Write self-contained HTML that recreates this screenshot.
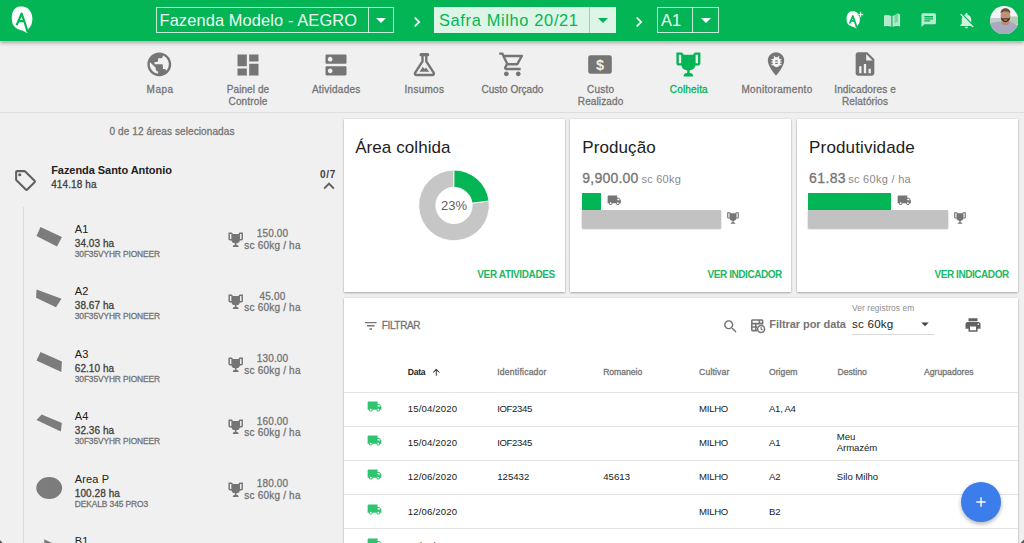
<!DOCTYPE html><html lang="pt-BR"><head><meta charset="utf-8"><title>Aegro - Colheita</title><style>
html,body{margin:0;padding:0}body{width:1024px;height:543px;overflow:hidden;background:#F0F0F0;font-family:"Liberation Sans",sans-serif;position:relative}
.t{position:absolute;white-space:nowrap;line-height:1;margin:0}
</style></head><body>
<div style="position:absolute;left:0;top:0;width:1024px;height:41px;background:#03B554;box-shadow:0 2px 4px rgba(0,0,0,.3)"></div>
<div style="position:absolute;left:0;top:112px;width:1024px;height:1px;background:#DEDEDE"></div>
<svg style="position:absolute;left:11px;top:6px" width="23" height="28" viewBox="0 0 23 28">
<path fill="#fff" d="M8.8 0.5C12 0.3 15 1 16.6 2.3C19.5 4.5 21.4 8.5 21.4 12.4C21.4 15 20.8 17.2 20.3 18.9C19.6 20.5 18.6 21.6 17.5 22.5L16.2 27L12 24.8C8 24 4.6 22.4 2.8 19.8C1.2 17.6 0.8 15 0.8 12.4C0.8 9 1.4 6.2 2.8 4.1C4.2 2 6.4 0.7 8.8 0.5Z"/>
<path fill="none" stroke="#03B554" stroke-width="2.2" stroke-linecap="round" stroke-linejoin="round" d="M6 18.4L10.6 7.6L14.2 18L16.4 25.2M7.8 15.1L13.4 15"/>
</svg>
<div style="position:absolute;left:156px;top:7px;width:238px;height:26px;box-sizing:border-box;border:1px solid rgba(255,255,255,.75)"></div>
<div style="position:absolute;left:368px;top:7px;width:1px;height:26px;background:rgba(255,255,255,.75)"></div>
<svg style="position:absolute;left:369.0px;top:8px" width="24" height="24" viewBox="0 0 24 24" ><path fill="#fff" d="M7 10l5 5 5-5z"/></svg>
<div style="position:absolute;left:434px;top:7px;width:182px;height:26px;background:#DDF5E6"></div>
<div style="position:absolute;left:589px;top:7px;width:1px;height:26px;background:#8FDCAE"></div>
<svg style="position:absolute;left:590.5px;top:8px" width="24" height="24" viewBox="0 0 24 24" ><path fill="#03B554" d="M7 10l5 5 5-5z"/></svg>
<div style="position:absolute;left:657px;top:7px;width:62px;height:26px;box-sizing:border-box;border:1px solid rgba(255,255,255,.75)"></div>
<div style="position:absolute;left:692px;top:7px;width:1px;height:26px;background:rgba(255,255,255,.75)"></div>
<svg style="position:absolute;left:693.5px;top:8px" width="24" height="24" viewBox="0 0 24 24" ><path fill="#fff" d="M7 10l5 5 5-5z"/></svg>
<svg style="position:absolute;left:406.5px;top:11.5px" width="20" height="20" viewBox="0 0 24 24" ><path fill="#fff" d="M10 6L8.59 7.41 13.17 12l-4.58 4.59L10 18l6-6z"/></svg>
<svg style="position:absolute;left:628.5px;top:11.5px" width="20" height="20" viewBox="0 0 24 24" ><path fill="#fff" d="M10 6L8.59 7.41 13.17 12l-4.58 4.59L10 18l6-6z"/></svg>
<svg style="position:absolute;left:846.2px;top:11px" width="20" height="18" viewBox="0 0 20 18">
<g transform="scale(0.65)"><path fill="#fff" d="M8.8 0.5C12 0.3 15 1 16.6 2.3C19.5 4.5 21.4 8.5 21.4 12.4C21.4 15 20.8 17.2 20.3 18.9C19.6 20.5 18.6 21.6 17.5 22.5L16.2 27L12 24.8C8 24 4.6 22.4 2.8 19.8C1.2 17.6 0.8 15 0.8 12.4C0.8 9 1.4 6.2 2.8 4.1C4.2 2 6.4 0.7 8.8 0.5Z"/>
<path fill="none" stroke="#03B554" stroke-width="2.6" stroke-linecap="round" stroke-linejoin="round" d="M6 18.4L10.6 7.6L14.2 18L16.2 24.6M7.8 15.1L13.4 15"/></g>
<path fill="#fff" stroke="#03B554" stroke-width="0.5" d="M13.9 0.8h1.5v2h2v1.5h-2v2h-1.5v-2h-2v-1.5h2z"/>
</svg>
<svg style="position:absolute;left:883px;top:12px" width="18" height="16" viewBox="0 0 18 16">
<g fill="rgba(255,255,255,.70)"><path d="M1 3.4C3.4 2.6 6 2.8 8.3 3.9V14.8C6 13.8 3.4 13.6 1 14.4Z"/>
<path d="M9.5 3.9C10.4 3.4 11 3.1 11.8 2.9V11.6L14.6 9.4V1.2L17.1 2.4V14.4C14.6 13.6 12 13.8 9.5 14.8Z"/></g>
<path fill="rgba(255,255,255,.45)" d="M11.8 2.9L14.6 1.2V9.4L11.8 11.6Z"/></svg>
<svg style="position:absolute;left:920.1px;top:11.7px" width="17.4" height="16.4" viewBox="0 0 24 24" preserveAspectRatio="none"><path fill="rgba(255,255,255,.72)" d="M20 2H4c-1.1 0-1.99.9-1.99 2L2 22l4-4h14c1.1 0 2-.9 2-2V4c0-1.1-.9-2-2-2zM6 9h12v2H6V9zm8 5H6v-2h8v2zm4-6H6V6h12v2z"/></svg>
<svg style="position:absolute;left:956.5px;top:10.5px" width="19" height="19" viewBox="0 0 24 24" ><path fill="rgba(255,255,255,.82)" d="M20 18.69L7.84 6.14 5.27 3.49 4 4.76l2.8 2.8v.01c-.52.99-.8 2.16-.8 3.42v5l-2 2v1h13.73l2 2L21 19.72l-1-1.03zM12 22c1.11 0 2-.89 2-2h-4c0 1.11.89 2 2 2zm6-7.32V11c0-3.08-1.64-5.64-4.5-6.32V4c0-.83-.67-1.5-1.5-1.5s-1.5.67-1.5 1.5v.68c-.15.03-.29.08-.42.12-.1.03-.2.07-.3.11h-.01c-.01 0-.01 0-.02.01-.23.09-.46.2-.68.31 0 0-.01 0-.01.01L18 14.68z"/></svg>
<svg style="position:absolute;left:989.9px;top:5.5px" width="28.4" height="28.4" viewBox="0 0 28.4 28.4">
<defs><clipPath id="av"><circle cx="14.2" cy="14.2" r="14.2"/></clipPath></defs>
<g clip-path="url(#av)"><rect width="28.4" height="28.4" fill="#F4F4F6"/>
<rect x="0" y="12" width="28.4" height="6" fill="#C3CBCB"/>
<rect x="19" y="10.5" width="10" height="8" fill="#B9C9B4"/>
<path d="M0 28.4V17.5C3 16.5 7 15.6 10.5 15.8L20.5 15.8C24 17 27 19 28.4 21V28.4Z" fill="#A9AAC0"/>
<path d="M11.6 12H19.4V17.5C18 19.6 13.4 19.6 11.6 17.5Z" fill="#B98B73"/>
<ellipse cx="15.5" cy="9" rx="4.9" ry="6.6" fill="#C09078"/>
<path d="M10.6 7.2C10.4 0.6 20.6 0.6 20.4 7.2C19 4.8 12 4.8 10.6 7.2Z" fill="#6B5040"/>
<path d="M10.7 10.6C11 18 20 18 20.3 10.6C19.4 13.2 17.6 12.2 15.5 12.2C13.4 12.2 11.6 13.2 10.7 10.6Z" fill="#4A3226"/>
<path d="M13.4 13.4C14.6 15 16.4 15 17.6 13.4Z" fill="#D8A89A"/>
</g></svg>
<svg style="position:absolute;left:145.04999999999998px;top:50.2px" width="28.6" height="28.6" viewBox="0 0 24 24" ><path fill="#757575" d="M12 2C6.48 2 2 6.48 2 12s4.48 10 10 10 10-4.48 10-10S17.52 2 12 2zm-1 17.93c-3.95-.49-7-3.85-7-7.93 0-.62.08-1.21.21-1.79L9 15v1c0 1.1.9 2 2 2v1.93zm6.9-2.54c-.26-.81-1-1.39-1.9-1.39h-1v-3c0-.55-.45-1-1-1H8v-2h2c.55 0 1-.45 1-1V7h2c1.1 0 2-.9 2-2v-.41c2.93 1.19 5 4.06 5 7.41 0 2.08-.8 3.97-2.1 5.39z"/></svg>
<svg style="position:absolute;left:233.7px;top:50.5px" width="28" height="28" viewBox="0 0 24 24" ><path fill="#757575" d="M3 13h8V3H3v10zm0 8h8v-6H3v6zm10 0h8V11h-8v10zm0-18v6h8V3h-8z"/></svg>
<svg style="position:absolute;left:321.84999999999997px;top:50.5px" width="28" height="28" viewBox="0 0 24 24" ><path fill="#757575" d="M20 13H4c-.55 0-1 .45-1 1v6c0 .55.45 1 1 1h16c.55 0 1-.45 1-1v-6c0-.55-.45-1-1-1zM7 19c-1.1 0-2-.9-2-2s.9-2 2-2 2 .9 2 2-.9 2-2 2zM20 3H4c-.55 0-1 .45-1 1v6c0 .55.45 1 1 1h16c.55 0 1-.45 1-1V4c0-.55-.45-1-1-1zM7 9c-1.1 0-2-.9-2-2s.9-2 2-2 2 .9 2 2-.9 2-2 2z"/></svg>
<svg style="position:absolute;left:411.80000000000007px;top:52px" width="25" height="25" viewBox="0 0 25 25">
<path fill="none" stroke="#757575" stroke-width="3.2" stroke-linecap="round" d="M9.1 2.7H15.7"/>
<path fill="none" stroke="#757575" stroke-width="2.4" stroke-linejoin="round" stroke-linecap="round" d="M10.5 4V9.4L3.2 20.6C2.4 21.9 3.2 23 4.6 23H20.2C21.6 23 22.4 21.9 21.6 20.6L14.3 9.4V4"/>
<path fill="#757575" d="M7.6 19.8L10.8 14.8L12.5 16.9L14 15.5L17.3 19.8Z"/></svg>
<svg style="position:absolute;left:498.15000000000003px;top:50.3px" width="28.6" height="28.6" viewBox="0 0 24 24" ><path fill="#757575" d="M15.55 13c.75 0 1.41-.41 1.75-1.03l3.58-6.49c.37-.66-.11-1.48-.87-1.48H5.21l-.94-2H1v2h2l3.6 7.59-1.35 2.44C4.52 15.37 5.48 17 7 17h12v-2H7l1.1-2h7.45zM6.16 6h12.15l-2.76 5H8.53L6.16 6zM7 18c-1.1 0-1.99.9-1.99 2S5.9 22 7 22s2-.9 2-2-.9-2-2-2zm10 0c-1.1 0-1.99.9-1.99 2s.89 2 1.99 2 2-.9 2-2-.9-2-2-2z"/></svg>
<svg style="position:absolute;left:588.1px;top:55px" width="24" height="19" viewBox="0 0 24 19">
<rect x="0.2" y="0.2" width="23.6" height="18.6" rx="2.4" fill="#757575"/>
<text x="12" y="14.6" text-anchor="middle" font-family="Liberation Sans,sans-serif" font-weight="700" font-size="14.5" fill="#F0F0F0">$</text></svg>
<svg style="position:absolute;left:673.6500000000001px;top:50.1px" width="28.8" height="28.8" viewBox="0 0 24 24" ><path fill="#03B554" d="M20.2,2H19.5H18C17.1,2 16,3 16,4H8C8,3 6.9,2 6,2H4.5H3.8H2V11C2,12 3,13 4,13H6.2C6.6,15 7.9,16.7 11,17V19.1C8.8,19.3 8,20.4 8,21.7V22H16V21.7C16,20.4 15.2,19.3 13,19.1V17C16.1,16.7 17.4,15 17.8,13H20C21,13 22,12 22,11V2H20.2M4,11V4H6V6V11C5.1,11 4.3,11 4,11M20,11C19.7,11 18.9,11 18,11V6V4H20V11Z"/></svg>
<svg style="position:absolute;left:762.4000000000001px;top:50px" width="28" height="28" viewBox="0 0 24 24" ><path fill="#757575" d="M12 2C8.13 2 5 5.13 5 9c0 5.25 7 13 7 13s7-7.75 7-13c0-3.87-3.13-7-7-7z"/></svg>
<svg style="position:absolute;left:769.2px;top:53.5px" width="15" height="15" viewBox="0 0 24 24" ><path fill="#F4F4F4" d="M20 8h-2.81c-.45-.78-1.07-1.45-1.82-1.96L17 4.41 15.59 3l-2.17 2.17C12.96 5.06 12.49 5 12 5c-.49 0-.96.06-1.41.17L8.41 3 7 4.41l1.62 1.63C7.88 6.55 7.26 7.22 6.81 8H4v2h2.09c-.05.33-.09.66-.09 1v1H4v2h2v1c0 .34.04.67.09 1H4v2h2.81c1.04 1.79 2.97 3 5.19 3s4.15-1.21 5.19-3H20v-2h-2.09c.05-.33.09-.66.09-1v-1h2v-2h-2v-1c0-.34-.04-.67-.09-1H20V8zm-6 8h-4v-2h4v2zm0-4h-4v-2h4v2z"/></svg>
<svg style="position:absolute;left:850.7500000000001px;top:50.2px" width="28" height="28" viewBox="0 0 24 24" ><path fill="#757575" d="M13,9H18.5L13,3.5V9M6,2H14L20,8V20A2,2 0 0,1 18,22H6C4.89,22 4,21.1 4,20V4C4,2.89 4.89,2 6,2M7,20H9V14H7V20M11,20H13V12H11V20M15,20H17V16H15V20Z"/></svg>
<svg style="position:absolute;left:13.2px;top:168.2px" width="25" height="25" viewBox="0 0 24 24" ><path fill="#616161" d="M21.41 11.58l-9-9C12.05 2.22 11.55 2 11 2H4c-1.1 0-2 .9-2 2v7c0 .55.22 1.05.59 1.42l9 9c.36.36.86.58 1.41.58s1.05-.22 1.41-.59l7-7c.37-.36.59-.86.59-1.41s-.23-1.06-.59-1.42zM13 20.01L4 11V4h7v-.01l9 9-7 7.02zM6.5 5A1.5 1.5 0 1 0 6.5 8A1.5 1.5 0 1 0 6.5 5z"/></svg>
<svg style="position:absolute;left:317.8px;top:175.2px" width="22" height="22" viewBox="0 0 24 24" ><path fill="#616161" d="M12 8l-6 6 1.41 1.41L12 10.83l4.59 4.58L18 14z"/></svg>
<div style="position:absolute;left:23px;top:207px;width:1px;height:340px;background:#DCDCDC"></div>
<svg style="position:absolute;left:0;top:0" width="343" height="543" viewBox="0 0 343 543"><polygon fill="#7C7C7C" points="40.5,227 61.9,237 57,246.5 36.5,235.9"/><polygon fill="#7C7C7C" points="36.5,289.6 61.5,298.8 56,307.2 36.1,297.7"/><polygon fill="#7C7C7C" points="40.5,352 61.9,361.5 61.3,372.1 36.5,360.4"/><polygon fill="#7C7C7C" points="41.6,414.6 61.9,423 60.8,431.6 36.5,420.1"/><ellipse cx="49.2" cy="488" rx="12.9" ry="11" fill="#7C7C7C"/><polygon fill="#7C7C7C" points="44.2,539.2 53,543.5 44.2,543.5"/></svg>
<svg style="position:absolute;left:226.6px;top:230.5px" width="17.4" height="17.4" viewBox="0 0 24 24" ><path fill="#757575" d="M20.2,2H19.5H18C17.1,2 16,3 16,4H8C8,3 6.9,2 6,2H4.5H3.8H2V11C2,12 3,13 4,13H6.2C6.6,15 7.9,16.7 11,17V19.1C8.8,19.3 8,20.4 8,21.7V22H16V21.7C16,20.4 15.2,19.3 13,19.1V17C16.1,16.7 17.4,15 17.8,13H20C21,13 22,12 22,11V2H20.2M4,11V4H6V6V11C5.1,11 4.3,11 4,11M20,11C19.7,11 18.9,11 18,11V6V4H20V11Z"/></svg>
<svg style="position:absolute;left:226.6px;top:293.0px" width="17.4" height="17.4" viewBox="0 0 24 24" ><path fill="#757575" d="M20.2,2H19.5H18C17.1,2 16,3 16,4H8C8,3 6.9,2 6,2H4.5H3.8H2V11C2,12 3,13 4,13H6.2C6.6,15 7.9,16.7 11,17V19.1C8.8,19.3 8,20.4 8,21.7V22H16V21.7C16,20.4 15.2,19.3 13,19.1V17C16.1,16.7 17.4,15 17.8,13H20C21,13 22,12 22,11V2H20.2M4,11V4H6V6V11C5.1,11 4.3,11 4,11M20,11C19.7,11 18.9,11 18,11V6V4H20V11Z"/></svg>
<svg style="position:absolute;left:226.6px;top:355.5px" width="17.4" height="17.4" viewBox="0 0 24 24" ><path fill="#757575" d="M20.2,2H19.5H18C17.1,2 16,3 16,4H8C8,3 6.9,2 6,2H4.5H3.8H2V11C2,12 3,13 4,13H6.2C6.6,15 7.9,16.7 11,17V19.1C8.8,19.3 8,20.4 8,21.7V22H16V21.7C16,20.4 15.2,19.3 13,19.1V17C16.1,16.7 17.4,15 17.8,13H20C21,13 22,12 22,11V2H20.2M4,11V4H6V6V11C5.1,11 4.3,11 4,11M20,11C19.7,11 18.9,11 18,11V6V4H20V11Z"/></svg>
<svg style="position:absolute;left:226.6px;top:418.0px" width="17.4" height="17.4" viewBox="0 0 24 24" ><path fill="#757575" d="M20.2,2H19.5H18C17.1,2 16,3 16,4H8C8,3 6.9,2 6,2H4.5H3.8H2V11C2,12 3,13 4,13H6.2C6.6,15 7.9,16.7 11,17V19.1C8.8,19.3 8,20.4 8,21.7V22H16V21.7C16,20.4 15.2,19.3 13,19.1V17C16.1,16.7 17.4,15 17.8,13H20C21,13 22,12 22,11V2H20.2M4,11V4H6V6V11C5.1,11 4.3,11 4,11M20,11C19.7,11 18.9,11 18,11V6V4H20V11Z"/></svg>
<svg style="position:absolute;left:226.6px;top:480.5px" width="17.4" height="17.4" viewBox="0 0 24 24" ><path fill="#757575" d="M20.2,2H19.5H18C17.1,2 16,3 16,4H8C8,3 6.9,2 6,2H4.5H3.8H2V11C2,12 3,13 4,13H6.2C6.6,15 7.9,16.7 11,17V19.1C8.8,19.3 8,20.4 8,21.7V22H16V21.7C16,20.4 15.2,19.3 13,19.1V17C16.1,16.7 17.4,15 17.8,13H20C21,13 22,12 22,11V2H20.2M4,11V4H6V6V11C5.1,11 4.3,11 4,11M20,11C19.7,11 18.9,11 18,11V6V4H20V11Z"/></svg>
<div style="position:absolute;left:344px;top:119px;width:220.6px;height:173px;background:#fff;box-shadow:0 1px 2px rgba(0,0,0,.28),0 0 2px rgba(0,0,0,.10)"></div>
<div style="position:absolute;left:570.4px;top:119px;width:220.6px;height:173px;background:#fff;box-shadow:0 1px 2px rgba(0,0,0,.28),0 0 2px rgba(0,0,0,.10)"></div>
<div style="position:absolute;left:797px;top:119px;width:221px;height:173px;background:#fff;box-shadow:0 1px 2px rgba(0,0,0,.28),0 0 2px rgba(0,0,0,.10)"></div>
<div style="position:absolute;left:344px;top:298px;width:674px;height:260px;background:#fff;box-shadow:0 1px 2px rgba(0,0,0,.28),0 0 2px rgba(0,0,0,.10)"></div>
<svg style="position:absolute;left:0;top:0" width="1024" height="543" viewBox="0 0 1024 543">
<path d="M489.02 200.98A35.3 35.3 0 1 1 454.00 170.10L454.00 187.20A18.2 18.2 0 1 0 472.06 203.12Z" fill="#C6C6C6" stroke="#fff" stroke-width="0.8"/>
<path d="M454.00 170.10A35.3 35.3 0 0 1 489.02 200.98L472.06 203.12A18.2 18.2 0 0 0 454.00 187.20Z" fill="#03B554" stroke="#fff" stroke-width="0.8"/>
</svg>
<div style="position:absolute;left:581.6px;top:210.3px;width:139px;height:18px;background:#C2C2C2;box-shadow:0 1px 1.5px rgba(0,0,0,.3)"></div>
<div style="position:absolute;left:581.6px;top:192.8px;width:19.2px;height:17.6px;background:#03B554"></div>
<svg style="position:absolute;left:606.8000000000001px;top:193px" width="14.5" height="14.5" viewBox="0 0 24 24" ><path fill="#757575" d="M20 8h-3V4H3c-1.1 0-2 .9-2 2v11h2c0 1.66 1.34 3 3 3s3-1.34 3-3h6c0 1.66 1.34 3 3 3s3-1.34 3-3h2v-5l-3-4zM6 18.5c-.83 0-1.5-.67-1.5-1.5s.67-1.5 1.5-1.5 1.5.67 1.5 1.5-.67 1.5-1.5 1.5zm13.5-9l1.96 2.5H17V9.5h2.5zm-1.5 9c-.83 0-1.5-.67-1.5-1.5s.67-1.5 1.5-1.5 1.5.67 1.5 1.5-.67 1.5-1.5 1.5z"/></svg>
<svg style="position:absolute;left:726.4px;top:211.3px" width="14" height="14" viewBox="0 0 24 24" ><path fill="#757575" d="M20.2,2H19.5H18C17.1,2 16,3 16,4H8C8,3 6.9,2 6,2H4.5H3.8H2V11C2,12 3,13 4,13H6.2C6.6,15 7.9,16.7 11,17V19.1C8.8,19.3 8,20.4 8,21.7V22H16V21.7C16,20.4 15.2,19.3 13,19.1V17C16.1,16.7 17.4,15 17.8,13H20C21,13 22,12 22,11V2H20.2M4,11V4H6V6V11C5.1,11 4.3,11 4,11M20,11C19.7,11 18.9,11 18,11V6V4H20V11Z"/></svg>
<div style="position:absolute;left:808.4px;top:210.3px;width:139.2px;height:18px;background:#C2C2C2;box-shadow:0 1px 1.5px rgba(0,0,0,.3)"></div>
<div style="position:absolute;left:808.4px;top:192.8px;width:82.7px;height:17.6px;background:#03B554"></div>
<svg style="position:absolute;left:897.1px;top:193px" width="14.5" height="14.5" viewBox="0 0 24 24" ><path fill="#757575" d="M20 8h-3V4H3c-1.1 0-2 .9-2 2v11h2c0 1.66 1.34 3 3 3s3-1.34 3-3h6c0 1.66 1.34 3 3 3s3-1.34 3-3h2v-5l-3-4zM6 18.5c-.83 0-1.5-.67-1.5-1.5s.67-1.5 1.5-1.5 1.5.67 1.5 1.5-.67 1.5-1.5 1.5zm13.5-9l1.96 2.5H17V9.5h2.5zm-1.5 9c-.83 0-1.5-.67-1.5-1.5s.67-1.5 1.5-1.5 1.5.67 1.5 1.5-.67 1.5-1.5 1.5z"/></svg>
<svg style="position:absolute;left:953.3999999999999px;top:211.3px" width="14" height="14" viewBox="0 0 24 24" ><path fill="#757575" d="M20.2,2H19.5H18C17.1,2 16,3 16,4H8C8,3 6.9,2 6,2H4.5H3.8H2V11C2,12 3,13 4,13H6.2C6.6,15 7.9,16.7 11,17V19.1C8.8,19.3 8,20.4 8,21.7V22H16V21.7C16,20.4 15.2,19.3 13,19.1V17C16.1,16.7 17.4,15 17.8,13H20C21,13 22,12 22,11V2H20.2M4,11V4H6V6V11C5.1,11 4.3,11 4,11M20,11C19.7,11 18.9,11 18,11V6V4H20V11Z"/></svg>
<svg style="position:absolute;left:362.7px;top:317.8px" width="15.5" height="15.5" viewBox="0 0 24 24" ><path fill="#757575" d="M10 18h4v-2h-4v2zM3 6v2h18V6H3zm3 7h12v-2H6v2z"/></svg>
<svg style="position:absolute;left:722.3px;top:317.6px" width="17" height="17" viewBox="0 0 24 24" ><path fill="#757575" d="M15.5 14h-.79l-.28-.27C15.41 12.59 16 11.11 16 9.5 16 5.91 13.09 3 9.5 3S3 5.91 3 9.5 5.91 16 9.5 16c1.61 0 3.09-.59 4.23-1.57l.27.28v.79l5 4.99L20.49 19l-4.99-5zm-6 0C7.01 14 5 11.99 5 9.5S7.01 5 9.5 5 14 7.01 14 9.5 11.99 14 9.5 14z"/></svg>
<svg style="position:absolute;left:750px;top:317.5px" width="16" height="16" viewBox="0 0 16 16">
<path fill="none" stroke="#757575" stroke-width="1.6" stroke-linejoin="round" d="M7.6 12.6H2.6C2.1 12.6 1.8 12.3 1.8 11.8V2.8C1.8 2.3 2.1 2 2.6 2H11.8C12.3 2 12.6 2.3 12.6 2.8V6.6M1.8 5.6H12.6M1.8 9H7.4M5.8 5.6V12.6M9.4 2V5.6"/>
<circle cx="11.1" cy="11" r="3.5" fill="#fff" stroke="#757575" stroke-width="1.5"/>
<path fill="none" stroke="#757575" stroke-width="1.1" d="M11.1 9V11.2L12.6 12"/></svg>
<div style="position:absolute;left:852px;top:334px;width:82px;height:1px;background:#DADADA"></div>
<svg style="position:absolute;left:916.3px;top:315px" width="18" height="18" viewBox="0 0 24 24" ><path fill="#424242" d="M7 10l5 5 5-5z"/></svg>
<svg style="position:absolute;left:964px;top:316px" width="18" height="18" viewBox="0 0 24 24" ><path fill="#616161" d="M19 8H5c-1.66 0-3 1.34-3 3v6h4v4h12v-4h4v-6c0-1.66-1.34-3-3-3zm-3 11H8v-5h8v5zm3-7c-.55 0-1-.45-1-1s.45-1 1-1 1 .45 1 1-.45 1-1 1zm-1-9H6v4h12V3z"/></svg>
<svg style="position:absolute;left:431.45px;top:366.6px" width="10.5" height="10.5" viewBox="0 0 24 24" ><path fill="#212121" d="M4 12l1.41 1.41L11 7.83V20h2V7.83l5.58 5.59L20 12l-8-8-8 8z"/></svg>
<div style="position:absolute;left:344px;top:391.7px;width:674px;height:1px;background:#E4E4E4"></div>
<svg style="position:absolute;left:366.7px;top:399.1px" width="15" height="15" viewBox="0 0 24 24" ><path fill="#2FC46F" d="M20 8h-3V4H3c-1.1 0-2 .9-2 2v11h2c0 1.66 1.34 3 3 3s3-1.34 3-3h6c0 1.66 1.34 3 3 3s3-1.34 3-3h2v-5l-3-4zM6 18.5c-.83 0-1.5-.67-1.5-1.5s.67-1.5 1.5-1.5 1.5.67 1.5 1.5-.67 1.5-1.5 1.5zm13.5-9l1.96 2.5H17V9.5h2.5zm-1.5 9c-.83 0-1.5-.67-1.5-1.5s.67-1.5 1.5-1.5 1.5.67 1.5 1.5-.67 1.5-1.5 1.5z"/></svg>
<div style="position:absolute;left:344px;top:425.9px;width:674px;height:1px;background:#E4E4E4"></div>
<svg style="position:absolute;left:366.7px;top:433.27000000000004px" width="15" height="15" viewBox="0 0 24 24" ><path fill="#2FC46F" d="M20 8h-3V4H3c-1.1 0-2 .9-2 2v11h2c0 1.66 1.34 3 3 3s3-1.34 3-3h6c0 1.66 1.34 3 3 3s3-1.34 3-3h2v-5l-3-4zM6 18.5c-.83 0-1.5-.67-1.5-1.5s.67-1.5 1.5-1.5 1.5.67 1.5 1.5-.67 1.5-1.5 1.5zm13.5-9l1.96 2.5H17V9.5h2.5zm-1.5 9c-.83 0-1.5-.67-1.5-1.5s.67-1.5 1.5-1.5 1.5.67 1.5 1.5-.67 1.5-1.5 1.5z"/></svg>
<div style="position:absolute;left:344px;top:460.0px;width:674px;height:1px;background:#E4E4E4"></div>
<svg style="position:absolute;left:366.7px;top:467.44px" width="15" height="15" viewBox="0 0 24 24" ><path fill="#2FC46F" d="M20 8h-3V4H3c-1.1 0-2 .9-2 2v11h2c0 1.66 1.34 3 3 3s3-1.34 3-3h6c0 1.66 1.34 3 3 3s3-1.34 3-3h2v-5l-3-4zM6 18.5c-.83 0-1.5-.67-1.5-1.5s.67-1.5 1.5-1.5 1.5.67 1.5 1.5-.67 1.5-1.5 1.5zm13.5-9l1.96 2.5H17V9.5h2.5zm-1.5 9c-.83 0-1.5-.67-1.5-1.5s.67-1.5 1.5-1.5 1.5.67 1.5 1.5-.67 1.5-1.5 1.5z"/></svg>
<div style="position:absolute;left:344px;top:494.2px;width:674px;height:1px;background:#E4E4E4"></div>
<svg style="position:absolute;left:366.7px;top:501.61000000000007px" width="15" height="15" viewBox="0 0 24 24" ><path fill="#2FC46F" d="M20 8h-3V4H3c-1.1 0-2 .9-2 2v11h2c0 1.66 1.34 3 3 3s3-1.34 3-3h6c0 1.66 1.34 3 3 3s3-1.34 3-3h2v-5l-3-4zM6 18.5c-.83 0-1.5-.67-1.5-1.5s.67-1.5 1.5-1.5 1.5.67 1.5 1.5-.67 1.5-1.5 1.5zm13.5-9l1.96 2.5H17V9.5h2.5zm-1.5 9c-.83 0-1.5-.67-1.5-1.5s.67-1.5 1.5-1.5 1.5.67 1.5 1.5-.67 1.5-1.5 1.5z"/></svg>
<div style="position:absolute;left:344px;top:528.4px;width:674px;height:1px;background:#E4E4E4"></div>
<svg style="position:absolute;left:366.7px;top:535.78px" width="15" height="15" viewBox="0 0 24 24" ><path fill="#2FC46F" d="M20 8h-3V4H3c-1.1 0-2 .9-2 2v11h2c0 1.66 1.34 3 3 3s3-1.34 3-3h6c0 1.66 1.34 3 3 3s3-1.34 3-3h2v-5l-3-4zM6 18.5c-.83 0-1.5-.67-1.5-1.5s.67-1.5 1.5-1.5 1.5.67 1.5 1.5-.67 1.5-1.5 1.5zm13.5-9l1.96 2.5H17V9.5h2.5zm-1.5 9c-.83 0-1.5-.67-1.5-1.5s.67-1.5 1.5-1.5 1.5.67 1.5 1.5-.67 1.5-1.5 1.5z"/></svg>
<svg style="position:absolute;left:0;top:0" width="1024" height="543" viewBox="0 0 1024 543"><polygon fill="#5A5A5A" points="0,540 2.6,543 0,543"/><polygon fill="#5A5A5A" points="1024,539.6 1024,543 1020.6,543"/></svg>
<div style="position:absolute;left:961.4px;top:481.8px;width:40px;height:40px;border-radius:50%;background:#3B7DEB;box-shadow:0 2px 4px rgba(0,0,0,.3)"></div>
<svg style="position:absolute;left:973.4px;top:493.8px" width="16" height="16" viewBox="0 0 24 24" ><path fill="#fff" d="M19 13h-6v6h-2v-6H5v-2h6V5h2v6h6v2z"/></svg>
<span class="t" id="t0" style="top:12.00px;font-size:16.4px;font-weight:400;color:#EEFCF4;letter-spacing:0.119px;left:159.50px;">Fazenda Modelo - AEGRO</span>
<span class="t" id="t1" style="top:12.00px;font-size:16.4px;font-weight:400;color:#03B554;letter-spacing:0.657px;left:439.00px;">Safra Milho 20/21</span>
<span class="t" id="t2" style="top:12.00px;font-size:16.4px;font-weight:400;color:#EEFCF4;left:661.00px;">A1</span>
<span class="t" id="t3" style="top:85.00px;font-size:10px;font-weight:500;color:#757575;letter-spacing:0.461px;left:146.60px;-webkit-text-stroke:0.3px;">Mapa</span>
<span class="t" id="t4" style="top:85.00px;font-size:10px;font-weight:500;color:#757575;letter-spacing:0.087px;left:226.75px;-webkit-text-stroke:0.3px;">Painel de</span>
<span class="t" id="t5" style="top:97.00px;font-size:10px;font-weight:500;color:#757575;letter-spacing:0.155px;left:228.50px;-webkit-text-stroke:0.3px;">Controle</span>
<span class="t" id="t6" style="top:85.00px;font-size:10px;font-weight:500;color:#757575;letter-spacing:0.251px;left:311.90px;-webkit-text-stroke:0.3px;">Atividades</span>
<span class="t" id="t7" style="top:85.00px;font-size:10px;font-weight:500;color:#757575;letter-spacing:0.267px;left:404.55px;-webkit-text-stroke:0.3px;">Insumos</span>
<span class="t" id="t8" style="top:85.00px;font-size:10px;font-weight:500;color:#757575;letter-spacing:0.018px;left:481.45px;-webkit-text-stroke:0.3px;">Custo Orçado</span>
<span class="t" id="t9" style="top:85.00px;font-size:10px;font-weight:500;color:#757575;letter-spacing:0.194px;left:587.10px;-webkit-text-stroke:0.3px;">Custo</span>
<span class="t" id="t10" style="top:97.00px;font-size:10px;font-weight:500;color:#757575;letter-spacing:0.114px;left:577.85px;-webkit-text-stroke:0.3px;">Realizado</span>
<span class="t" id="t11" style="top:85.00px;font-size:10px;font-weight:500;color:#03B554;letter-spacing:0.171px;left:669.75px;-webkit-text-stroke:0.3px;">Colheita</span>
<span class="t" id="t12" style="top:85.00px;font-size:10px;font-weight:500;color:#757575;letter-spacing:0.350px;left:741.40px;-webkit-text-stroke:0.3px;">Monitoramento</span>
<span class="t" id="t13" style="top:85.00px;font-size:10px;font-weight:500;color:#757575;letter-spacing:0.113px;left:834.30px;-webkit-text-stroke:0.3px;">Indicadores e</span>
<span class="t" id="t14" style="top:97.00px;font-size:10px;font-weight:500;color:#757575;letter-spacing:0.097px;left:842.05px;-webkit-text-stroke:0.3px;">Relatórios</span>
<span class="t" id="t15" style="top:127.00px;font-size:10px;font-weight:500;color:#757575;letter-spacing:0.104px;left:109.50px;-webkit-text-stroke:0.3px;">0 de 12 áreas selecionadas</span>
<b class="t" id="t16" style="top:165.00px;font-size:11px;font-weight:700;color:#212121;letter-spacing:-0.056px;left:51.20px;">Fazenda Santo Antonio</b>
<span class="t" id="t17" style="top:180.00px;font-size:10px;font-weight:500;color:#424242;letter-spacing:0.112px;left:51.20px;-webkit-text-stroke:0.3px;">414.18 ha</span>
<b class="t" id="t18" style="top:170.00px;font-size:10px;font-weight:700;color:#424242;left:320.00px;letter-spacing:.7px;">0/7</b>
<span class="t" id="t19" style="top:224.00px;font-size:11px;font-weight:400;color:#212121;left:74.80px;">A1</span>
<span class="t" id="t20" style="top:239.00px;font-size:10px;font-weight:500;color:#424242;letter-spacing:0.052px;left:74.80px;-webkit-text-stroke:0.3px;">34.03 ha</span>
<span class="t" id="t21" style="top:250.00px;font-size:8.4px;font-weight:500;color:#757575;letter-spacing:-0.118px;left:74.80px;-webkit-text-stroke:0.3px;">30F35VYHR PIONEER</span>
<span class="t" id="t22" style="top:229.00px;font-size:10px;font-weight:500;color:#757575;letter-spacing:0.161px;left:256.75px;-webkit-text-stroke:0.3px;">150.00</span>
<span class="t" id="t23" style="top:241.00px;font-size:10px;font-weight:500;color:#757575;letter-spacing:0.207px;left:244.25px;-webkit-text-stroke:0.3px;">sc 60kg / ha</span>
<span class="t" id="t24" style="top:286.00px;font-size:11px;font-weight:400;color:#212121;left:74.80px;">A2</span>
<span class="t" id="t25" style="top:301.00px;font-size:10px;font-weight:500;color:#424242;letter-spacing:0.052px;left:74.80px;-webkit-text-stroke:0.3px;">38.67 ha</span>
<span class="t" id="t26" style="top:312.00px;font-size:8.4px;font-weight:500;color:#757575;letter-spacing:-0.118px;left:74.80px;-webkit-text-stroke:0.3px;">30F35VYHR PIONEER</span>
<span class="t" id="t27" style="top:292.00px;font-size:10px;font-weight:500;color:#757575;letter-spacing:0.217px;left:259.50px;-webkit-text-stroke:0.3px;">45.00</span>
<span class="t" id="t28" style="top:303.00px;font-size:10px;font-weight:500;color:#757575;letter-spacing:0.207px;left:244.25px;-webkit-text-stroke:0.3px;">sc 60kg / ha</span>
<span class="t" id="t29" style="top:349.00px;font-size:11px;font-weight:400;color:#212121;left:74.80px;">A3</span>
<span class="t" id="t30" style="top:364.00px;font-size:10px;font-weight:500;color:#424242;letter-spacing:0.052px;left:74.80px;-webkit-text-stroke:0.3px;">62.10 ha</span>
<span class="t" id="t31" style="top:375.00px;font-size:8.4px;font-weight:500;color:#757575;letter-spacing:-0.118px;left:74.80px;-webkit-text-stroke:0.3px;">30F35VYHR PIONEER</span>
<span class="t" id="t32" style="top:354.00px;font-size:10px;font-weight:500;color:#757575;letter-spacing:0.161px;left:256.75px;-webkit-text-stroke:0.3px;">130.00</span>
<span class="t" id="t33" style="top:366.00px;font-size:10px;font-weight:500;color:#757575;letter-spacing:0.207px;left:244.25px;-webkit-text-stroke:0.3px;">sc 60kg / ha</span>
<span class="t" id="t34" style="top:411.00px;font-size:11px;font-weight:400;color:#212121;left:74.80px;">A4</span>
<span class="t" id="t35" style="top:426.00px;font-size:10px;font-weight:500;color:#424242;letter-spacing:0.052px;left:74.80px;-webkit-text-stroke:0.3px;">32.36 ha</span>
<span class="t" id="t36" style="top:437.00px;font-size:8.4px;font-weight:500;color:#757575;letter-spacing:-0.118px;left:74.80px;-webkit-text-stroke:0.3px;">30F35VYHR PIONEER</span>
<span class="t" id="t37" style="top:417.00px;font-size:10px;font-weight:500;color:#757575;letter-spacing:0.161px;left:256.75px;-webkit-text-stroke:0.3px;">160.00</span>
<span class="t" id="t38" style="top:428.00px;font-size:10px;font-weight:500;color:#757575;letter-spacing:0.207px;left:244.25px;-webkit-text-stroke:0.3px;">sc 60kg / ha</span>
<span class="t" id="t39" style="top:474.00px;font-size:11px;font-weight:400;color:#212121;letter-spacing:0.150px;left:74.80px;">Area P</span>
<span class="t" id="t40" style="top:489.00px;font-size:10px;font-weight:500;color:#424242;letter-spacing:0.075px;left:74.80px;-webkit-text-stroke:0.3px;">100.28 ha</span>
<span class="t" id="t41" style="top:500.00px;font-size:8.4px;font-weight:500;color:#757575;letter-spacing:-0.088px;left:74.80px;-webkit-text-stroke:0.3px;">DEKALB 345 PRO3</span>
<span class="t" id="t42" style="top:479.00px;font-size:10px;font-weight:500;color:#757575;letter-spacing:0.161px;left:256.75px;-webkit-text-stroke:0.3px;">180.00</span>
<span class="t" id="t43" style="top:491.00px;font-size:10px;font-weight:500;color:#757575;letter-spacing:0.207px;left:244.25px;-webkit-text-stroke:0.3px;">sc 60kg / ha</span>
<span class="t" id="t44" style="top:536.00px;font-size:11px;font-weight:400;color:#212121;left:74.80px;">B1</span>
<span class="t" id="t45" style="top:139.00px;font-size:17px;font-weight:400;color:#212121;letter-spacing:0.074px;left:355.20px;">Área colhida</span>
<span class="t" id="t46" style="top:139.00px;font-size:17px;font-weight:400;color:#212121;letter-spacing:0.078px;left:582.30px;">Produção</span>
<span class="t" id="t47" style="top:139.00px;font-size:17px;font-weight:400;color:#212121;letter-spacing:0.147px;left:809.10px;">Produtividade</span>
<span class="t" id="t48" style="top:199.00px;font-size:13px;font-weight:400;color:#616161;left:440.98px;">23%</span>
<b class="t" id="t49" style="top:270.00px;font-size:10px;font-weight:700;color:#1DB863;letter-spacing:-0.369px;left:477.30px;">VER ATIVIDADES</b>
<b class="t" id="t50" style="top:270.00px;font-size:10px;font-weight:700;color:#1DB863;letter-spacing:-0.443px;left:707.60px;">VER INDICADOR</b>
<b class="t" id="t51" style="top:270.00px;font-size:10px;font-weight:700;color:#1DB863;letter-spacing:-0.443px;left:934.50px;">VER INDICADOR</b>
<span class="t" id="t52" style="top:171.00px;font-size:14px;font-weight:500;color:#757575;letter-spacing:0.223px;left:582.30px;-webkit-text-stroke:0.3px;">9,900.00</span>
<span class="t" id="t53" style="top:174.00px;font-size:11px;font-weight:400;color:#8a8a8a;letter-spacing:0.245px;left:641.40px;">sc 60kg</span>
<span class="t" id="t54" style="top:171.00px;font-size:14px;font-weight:500;color:#757575;letter-spacing:0.378px;left:809.10px;-webkit-text-stroke:0.3px;">61.83</span>
<span class="t" id="t55" style="top:174.00px;font-size:11px;font-weight:400;color:#8a8a8a;letter-spacing:0.287px;left:848.20px;">sc 60kg / ha</span>
<span class="t" id="t56" style="top:321.00px;font-size:10px;font-weight:500;color:#757575;letter-spacing:-0.340px;left:381.70px;-webkit-text-stroke:0.3px;">FILTRAR</span>
<b class="t" id="t57" style="top:319.00px;font-size:11px;font-weight:700;color:#757575;letter-spacing:-0.062px;left:769.30px;">Filtrar por data</b>
<span class="t" id="t58" style="top:304.00px;font-size:8.4px;font-weight:400;color:#8E8E8E;letter-spacing:0.071px;left:852.10px;">Ver registros em</span>
<span class="t" id="t59" style="top:318.00px;font-size:11.6px;font-weight:400;color:#212121;letter-spacing:0.196px;left:852.10px;">sc 60kg</span>
<b class="t" id="t60" style="top:368.00px;font-size:8.6px;font-weight:700;color:#212121;letter-spacing:-0.256px;left:407.70px;">Data</b>
<span class="t" id="t61" style="top:368.00px;font-size:8.6px;font-weight:500;color:#757575;letter-spacing:0.204px;left:497.20px;-webkit-text-stroke:0.3px;">Identificador</span>
<span class="t" id="t62" style="top:368.00px;font-size:8.6px;font-weight:500;color:#757575;letter-spacing:-0.028px;left:603.20px;-webkit-text-stroke:0.3px;">Romaneio</span>
<span class="t" id="t63" style="top:368.00px;font-size:8.6px;font-weight:500;color:#757575;letter-spacing:0.148px;left:699.10px;-webkit-text-stroke:0.3px;">Cultivar</span>
<span class="t" id="t64" style="top:368.00px;font-size:8.6px;font-weight:500;color:#757575;letter-spacing:0.077px;left:768.90px;-webkit-text-stroke:0.3px;">Origem</span>
<span class="t" id="t65" style="top:368.00px;font-size:8.6px;font-weight:500;color:#757575;letter-spacing:0.056px;left:837.40px;-webkit-text-stroke:0.3px;">Destino</span>
<span class="t" id="t66" style="top:368.00px;font-size:8.6px;font-weight:500;color:#757575;letter-spacing:0.046px;left:923.90px;-webkit-text-stroke:0.3px;">Agrupadores</span>
<span class="t" id="t67" style="top:404.00px;font-size:9.6px;font-weight:400;color:#212121;letter-spacing:0.150px;left:407.70px;">15/04/2020</span>
<span class="t" id="t68" style="top:404.00px;font-size:9.6px;font-weight:400;color:#212121;letter-spacing:-0.380px;left:497.20px;">IOF2345</span>
<span class="t" id="t69" style="top:404.00px;font-size:9.6px;font-weight:400;color:#212121;letter-spacing:-0.307px;left:699.10px;">MILHO</span>
<span class="t" id="t70" style="top:404.00px;font-size:9.6px;font-weight:400;color:#212121;letter-spacing:-0.243px;left:768.90px;">A1, A4</span>
<span class="t" id="t71" style="top:438.00px;font-size:9.6px;font-weight:400;color:#212121;letter-spacing:0.150px;left:407.70px;">15/04/2020</span>
<span class="t" id="t72" style="top:438.00px;font-size:9.6px;font-weight:400;color:#212121;letter-spacing:-0.380px;left:497.20px;">IOF2345</span>
<span class="t" id="t73" style="top:438.00px;font-size:9.6px;font-weight:400;color:#212121;letter-spacing:-0.307px;left:699.10px;">MILHO</span>
<span class="t" id="t74" style="top:438.00px;font-size:9.6px;font-weight:400;color:#212121;left:768.90px;">A1</span>
<span class="t" id="t75" style="top:432.00px;font-size:9.6px;font-weight:400;color:#212121;left:836.80px;">Meu</span>
<span class="t" id="t76" style="top:443.00px;font-size:9.6px;font-weight:400;color:#212121;letter-spacing:-0.114px;left:836.80px;">Armazém</span>
<span class="t" id="t77" style="top:472.00px;font-size:9.6px;font-weight:400;color:#212121;letter-spacing:0.150px;left:407.70px;">12/06/2020</span>
<span class="t" id="t78" style="top:472.00px;font-size:9.6px;font-weight:400;color:#212121;letter-spacing:0.010px;left:497.20px;">125432</span>
<span class="t" id="t79" style="top:472.00px;font-size:9.6px;font-weight:400;color:#212121;letter-spacing:0.044px;left:603.20px;">45613</span>
<span class="t" id="t80" style="top:472.00px;font-size:9.6px;font-weight:400;color:#212121;letter-spacing:-0.307px;left:699.10px;">MILHO</span>
<span class="t" id="t81" style="top:472.00px;font-size:9.6px;font-weight:400;color:#212121;left:768.90px;">A2</span>
<span class="t" id="t82" style="top:472.00px;font-size:9.6px;font-weight:400;color:#212121;letter-spacing:-0.026px;left:836.80px;">Silo Milho</span>
<span class="t" id="t83" style="top:507.00px;font-size:9.6px;font-weight:400;color:#212121;letter-spacing:0.150px;left:407.70px;">12/06/2020</span>
<span class="t" id="t84" style="top:507.00px;font-size:9.6px;font-weight:400;color:#212121;letter-spacing:-0.307px;left:699.10px;">MILHO</span>
<span class="t" id="t85" style="top:507.00px;font-size:9.6px;font-weight:400;color:#212121;left:768.90px;">B2</span>
<span class="t" id="t86" style="top:541.00px;font-size:9.6px;font-weight:400;color:#212121;letter-spacing:0.150px;left:407.70px;">12/06/2020</span>
<span class="t" id="t87" style="top:541.00px;font-size:9.6px;font-weight:400;color:#212121;letter-spacing:-0.307px;left:699.10px;">MILHO</span>
<span class="t" id="t88" style="top:541.00px;font-size:9.6px;font-weight:400;color:#212121;left:768.90px;">B2</span>
</body></html>
